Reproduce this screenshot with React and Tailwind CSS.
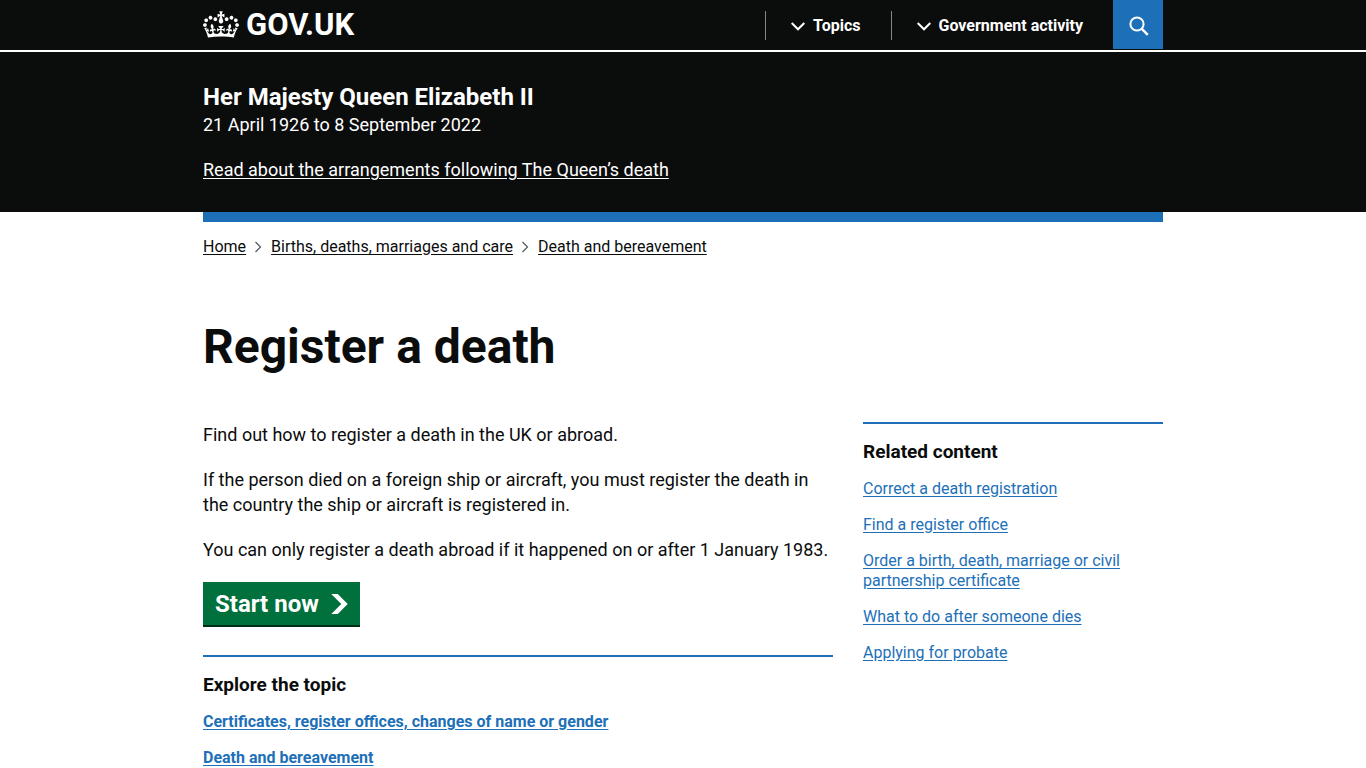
import React from 'react';
import clsx from 'clsx';

const NAV_ITEMS = ['Topics', 'Government activity'];

const BREADCRUMBS = ['Home', 'Births, deaths, marriages and care', 'Death and bereavement'];

const RELATED_LINKS = [
  'Correct a death registration',
  'Find a register office',
  'Order a birth, death, marriage or civil partnership certificate',
  'What to do after someone dies',
  'Applying for probate',
];

const TOPIC_LINKS = [
  'Certificates, register offices, changes of name or gender',
  'Death and bereavement',
];

function Container({ className, children }) {
  return (
    <div className="px-[30px]">
      <div className={clsx('mx-auto max-w-[960px]', className)}>{children}</div>
    </div>
  );
}

function Crown() {
  return (
    <svg viewBox="0 0 132 97" className="mb-0.5 h-[27px] w-9" fill="currentColor" aria-hidden="true">
      <path d="M25 30.2c3.5 1.5 7.7-.2 9.1-3.7 1.5-3.6-.2-7.8-3.9-9.2-3.6-1.4-7.6.3-9.1 3.9-1.4 3.5.3 7.5 3.9 9zM9 39.5c3.6 1.5 7.8-.2 9.2-3.7 1.5-3.6-.2-7.8-3.9-9.1-3.6-1.5-7.6.2-9.1 3.8-1.4 3.5.3 7.5 3.8 9zM4.4 57.2c3.5 1.5 7.7-.2 9.1-3.8 1.5-3.6-.2-7.7-3.9-9.1-3.5-1.5-7.6.3-9.1 3.8-1.4 3.5.3 7.6 3.9 9.1zm38.3-21.4c3.5 1.5 7.7-.2 9.1-3.8 1.5-3.6-.2-7.7-3.9-9.1-3.6-1.5-7.6.3-9.1 3.8-1.3 3.6.4 7.7 3.9 9.1zm64.4-5.6c-3.6 1.5-7.8-.2-9.1-3.7-1.5-3.6.2-7.8 3.8-9.2 3.6-1.4 7.7.3 9.2 3.9 1.3 3.5-.4 7.5-3.9 9zm15.9 9.3c-3.6 1.5-7.7-.2-9.1-3.7-1.5-3.6.2-7.8 3.7-9.1 3.6-1.5 7.7.2 9.2 3.8 1.5 3.5-.3 7.5-3.8 9zm4.7 17.7c-3.6 1.5-7.8-.2-9.2-3.8-1.5-3.6.2-7.7 3.9-9.1 3.6-1.5 7.7.3 9.2 3.8 1.3 3.5-.4 7.6-3.9 9.1zM89.3 35.8c-3.6 1.5-7.8-.2-9.2-3.8-1.4-3.6.2-7.7 3.9-9.1 3.6-1.5 7.7.3 9.2 3.8 1.4 3.6-.3 7.7-3.9 9.1zM69.7 17.7l8.9 4.7V9.3l-8.9 2.8c-.2-.3-.5-.6-.9-.9L72.4 0H59.6l3.5 11.2c-.3.3-.6.5-.9.9l-8.8-2.8v13.1l8.8-4.7c.3.3.6.7.9.9l-5 15.4v.1c-.2.8-.4 1.6-.4 2.4 0 4.1 3.1 7.5 7 8.1h.2c.3 0 .7.1 1 .1.4 0 .7 0 1-.1h.2c4-.6 7.1-4.1 7.1-8.1 0-.8-.1-1.7-.4-2.4V34l-5.1-15.4c.4-.2.7-.6 1-.9zM66 92.8c16.9 0 32.8 1.1 47.1 3.2 4-16.9 8.9-26.7 14-33.5l-9.6-3.4c1 4.9 1.1 7.2 0 10.2-1.5-1.4-3-4.3-4.2-8.7L108.6 76c2.8-2 5-3.2 7.5-3.3-4.4 9.4-10 11.9-13.6 11.2-4.3-.8-6.3-4.6-5.6-7.9 1-4.7 5.7-5.9 8-.5 4.3-8.7-3-11.4-7.6-8.8 7.1-7.2 7.9-13.5 2.1-21.1-8 6.1-8.1 12.3-4.5 20.8-4.7-5.4-12.1-2.5-9.5 6.2 3.4-5.2 7.9-2 7.2 3.1-.6 4.3-6.4 7.8-13.5 7.2-10.3-.9-10.9-8-11.2-13.8 2.5-.5 7.1 1.8 11 7.3L80.2 60c-4.1 4.4-8 5.3-12.3 5.4 1.4-4.4 8-11.6 8-11.6H55.5s6.4 7.2 7.9 11.6c-4.2-.1-8-1-12.3-5.4l1.4 16.4c3.9-5.5 8.5-7.7 10.9-7.3-.3 5.8-.9 12.8-11.1 13.8-7.2.6-12.9-2.9-13.5-7.2-.7-5 3.8-8.3 7.1-3.1 2.7-8.7-4.6-11.6-9.4-6.2 3.7-8.5 3.6-14.7-4.6-20.8-5.8 7.6-5 13.9 2.2 21.1-4.7-2.6-11.9.1-7.7 8.8 2.3-5.5 7.1-4.2 8.1.5.7 3.3-1.3 7.1-5.7 7.9-3.5.7-9-1.8-13.5-11.2 2.5.1 4.7 1.3 7.5 3.3l-4.7-15.4c-1.2 4.4-2.7 7.2-4.3 8.7-1.1-3-.9-5.3 0-10.2l-9.5 3.4c5 6.9 9.9 16.7 14 33.5 14.8-2.1 30.8-3.2 47.7-3.2z" />
    </svg>
  );
}

function ChevronDown() {
  return (
    <svg viewBox="0 0 14 9" className="h-[9px] w-[14px]" fill="none" stroke="currentColor" strokeWidth="2" aria-hidden="true">
      <path d="M0.7 1l6.3 6.3L13.3 1" />
    </svg>
  );
}

function Header() {
  return (
    <header className="border-b-2 border-white bg-[#0b0c0c] text-white">
      <Container className="flex h-[50px] items-center justify-between">
        <a href="#" className="flex items-center gap-[7px] text-[31px] leading-[30px] font-bold">
          <Crown />
          GOV.UK
        </a>
        <div className="flex items-center">
          <nav className="flex">
            {NAV_ITEMS.map(item => (
              <button key={item} type="button"
                className="flex h-[29px] items-center gap-2 border-l border-[#85888a] pt-0.5 pr-[30px] pl-[25px] text-base font-bold">
                <ChevronDown />
                {item}
              </button>
            ))}
          </nav>
          <button type="button" aria-label="Search GOV.UK"
            className="mb-px flex h-[49px] w-[50px] items-center justify-center bg-[#1d70b8] pt-0.5 pl-0.5">
            <svg viewBox="0 0 20 20" className="size-5" fill="none" stroke="currentColor" strokeWidth="2" aria-hidden="true">
              <circle cx="8" cy="8" r="6.6" />
              <path d="M12.6 12.6l6.2 6.2" strokeWidth="2.4" />
            </svg>
          </button>
        </div>
      </Container>
    </header>
  );
}

function Banner() {
  return (
    <section className="bg-[#0b0c0c] text-white">
      <Container className="flex flex-col items-start py-[30px]">
        <h2 className="text-2xl leading-[30px] font-bold">Her Majesty Queen Elizabeth II</h2>
        <p className="text-lg leading-[25px]">21 April 1926 to 8 September 2022</p>
        <a href="#" className="mt-5 text-lg leading-[25px] underline underline-offset-2">
          Read about the arrangements following The Queen’s death
        </a>
      </Container>
    </section>
  );
}

function Breadcrumbs() {
  return (
    <nav aria-label="Breadcrumb" className="border-t-10 border-[#1d70b8] pt-[15px]">
      <ol className="flex flex-wrap items-center text-base leading-5">
        {BREADCRUMBS.map((crumb, i) => (
          <li key={crumb} className="flex items-center">
            {i > 0 && (
              <svg viewBox="0 0 7 12" className="mx-[9px] h-3 w-[7px]" fill="none" stroke="#505a5f" strokeWidth="1.2" aria-hidden="true">
                <path d="M0.5 1l5 5-5 5" />
              </svg>
            )}
            <a href="#" className="underline underline-offset-2">{crumb}</a>
          </li>
        ))}
      </ol>
    </nav>
  );
}

function LinkSection({ title, links, bold }) {
  return (
    <section className="border-t-2 border-[#1d70b8] pt-[15px]">
      <h2 className="text-[19px] leading-[25px] font-bold">{title}</h2>
      <ul className={clsx('mt-[15px] space-y-4 text-base leading-5 text-[#1d70b8]', bold && 'font-bold')}>
        {links.map(link => (
          <li key={link}>
            <a href="#" className="underline underline-offset-2">{link}</a>
          </li>
        ))}
      </ul>
    </section>
  );
}

export default function App() {
  return (
    <div className="bg-white font-[Roboto,sans-serif] text-[#0b0c0c]">
      <Header />
      <Banner />
      <Container>
        <Breadcrumbs />
        <main className="grid grid-cols-1 gap-x-[30px] pt-[65px] md:grid-cols-[minmax(0,1fr)_300px]">
          <h1 className="text-5xl leading-[50px] font-bold md:col-span-2">Register a death</h1>
          <div className="mt-[50px]">
            <div className="space-y-5 text-lg leading-[25px]">
              <p>Find out how to register a death in the UK or abroad.</p>
              <p>
                If the person died on a foreign ship or aircraft, you must register the death in
                the country the ship or aircraft is registered in.
              </p>
              <p>You can only register a death abroad if it happened on or after 1 January 1983.</p>
            </div>
            <div className="mt-5 mb-7 flex">
              <a href="#" role="button"
                className="flex h-[45px] items-center gap-3 border-b-2 border-[#002d18] bg-[#00703c] px-3 text-2xl font-bold text-white">
                Start now
                <svg viewBox="0 0 33 40" className="h-5 w-[17px]" fill="currentColor" aria-hidden="true">
                  <path d="M0 0h13l20 20-20 20H0l20-20z" />
                </svg>
              </a>
            </div>
            <LinkSection title="Explore the topic" links={TOPIC_LINKS} bold />
          </div>
          <aside className="mt-[50px]">
            <LinkSection title="Related content" links={RELATED_LINKS} />
          </aside>
        </main>
      </Container>
    </div>
  );
}
